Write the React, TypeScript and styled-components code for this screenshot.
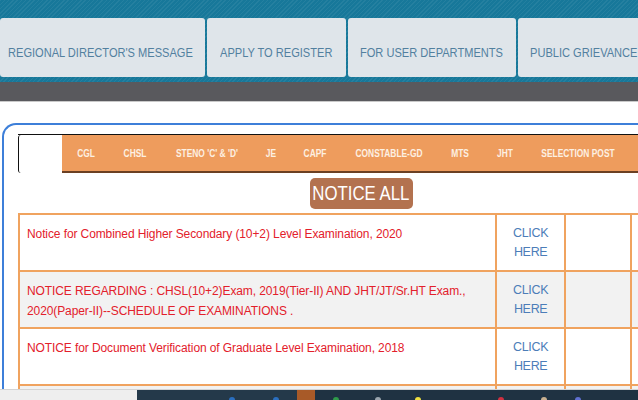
import React from 'react';
import styled, {createGlobalStyle} from 'styled-components';

const GlobalStyle = createGlobalStyle`
  html, body {
    margin: 0;
    padding: 0;
    background: #ffffff;
    overflow: hidden;
  }
  body {
    font-family: "Liberation Sans", Arial, sans-serif;
  }
`

const Page = styled.div`
  width: 638px;
  height: 400px;
  display: flex;
  flex-direction: column;
  overflow: hidden;
`
const TopNav = styled.nav`
  height: 82px;
  box-sizing: border-box;
  padding-top: 18px;
  padding-bottom: 5px;
  display: flex;
  gap: 2px;
  background-color: #17789a;
  background-image: repeating-linear-gradient(
    135deg,
    rgba(255, 255, 255, 0.06) 0px,
    rgba(255, 255, 255, 0.06) 1px,
    rgba(0, 0, 0, 0) 1px,
    rgba(0, 0, 0, 0) 3px
  );
`
const NavTab = styled.a<{ $w: number; $pad: number }>`
  width: ${p => p.$w}px;
  flex-shrink: 0;
  box-sizing: border-box;
  padding-left: ${p => p.$pad}px;
  padding-top: 9px;
  background: #dfe5ea;
  border-radius: 3px;
  display: flex;
  align-items: center;
  color: #52809f;
  white-space: nowrap;
  overflow: hidden;
`
const NavLabel = styled.span`
  display: inline-block;
  font-size: 13.5px;
  transform: scaleX(0.82);
  transform-origin: left center;
`
const GreyBand = styled.div`
  height: 19px;
  background: #59595d;
  border-bottom: 1px solid #c9c9c9;
`
const Content = styled.main`
  flex: 1;
  padding: 21px 0 0 2px;
  display: flex;
  flex-direction: column;
  min-height: 0;
`
const Panel = styled.section`
  flex: 1;
  border: 2px solid #3d7fd9;
  border-right: none;
  border-bottom: none;
  border-top-left-radius: 14px;
  padding: 9px 0 0 14px;
  min-height: 0;
  overflow: hidden;
`
const ExamBar = styled.div`
  display: flex;
  height: 38px;
  width: 700px;
  border-top: 1px solid #111;
`
const BlankTab = styled.div`
  width: 43px;
  border-left: 1px solid #111;
  border-top-left-radius: 3px;
  border-bottom-left-radius: 3px;
  background: #fff;
`
const ExamList = styled.ul`
  flex: 1;
  margin: 0;
  padding: 0;
  list-style: none;
  display: flex;
  align-items: center;
  background: #ee9c5d;
  border-bottom: 2px solid #6b4023;
  white-space: nowrap;
`
const ExamItem = styled.li<{ $w: number }>`
  width: ${p => p.$w}px;
  flex-shrink: 0;
  text-align: center;
  color: #fdf0e2;
  font-weight: bold;
  font-size: 11.5px;
  transform: scaleX(0.73);
`
const NoticeRow = styled.div`
  width: 686px;
  display: flex;
  justify-content: center;
  padding: 5px 0 4px 0;
`
const NoticeButton = styled.button`
  width: 103px;
  height: 31px;
  padding: 0;
  background: #b3724f;
  color: #ffffff;
  border: none;
  border-radius: 5px;
  display: flex;
  align-items: center;
  justify-content: center;
  overflow: visible;
  white-space: nowrap;
  font-family: "Liberation Sans", Arial, sans-serif;
`
const NoticeLabel = styled.span`
  display: inline-block;
  font-size: 20px;
  transform: scaleX(0.84);
`
const Table = styled.table`
  border-collapse: collapse;
  width: 680px;
`
const Tr = styled.tr<{ $alt?: boolean }>`
  background: ${p => (p.$alt ? '#f2f2f2' : '#ffffff')};
  height: 57px;
`
const TitleCell = styled.td`
  width: 466px;
  border: 2px solid #f0a35f;
  vertical-align: top;
  padding: 9px 8px 0 7px;
  color: #e3202b;
  font-size: 12px;
  line-height: 20px;
  letter-spacing: -0.1px;
`
const LinkCell = styled.td`
  width: 65px;
  border: 2px solid #f0a35f;
  vertical-align: top;
  padding-top: 9px;
  text-align: center;
  color: #4c7db8;
  font-size: 12.5px;
  letter-spacing: -0.3px;
  line-height: 19px;
`
const EmptyCell = styled.td`
  width: 63px;
  border: 2px solid #f0a35f;
`
const Taskbar = styled.footer`
  height: 11px;
  display: flex;
  flex-shrink: 0;
`
const TaskSegment = styled.div<{ $w?: number; $bg: string }>`
  width: ${p => (p.$w ? `${p.$w}px` : 'auto')};
  flex: ${p => (p.$w ? '0 0 auto' : '1')};
  background: ${p => p.$bg};
  border-top: 1px solid #d4d4d4;
  position: relative;
`
const Pip = styled.span<{ $x: number; $c: string }>`
  position: absolute;
  left: ${p => p.$x}px;
  bottom: 0;
  width: 6px;
  height: 3px;
  border-radius: 3px 3px 0 0;
  background: ${p => p.$c};
`

const navTabs = [
    {label: "REGIONAL DIRECTOR'S MESSAGE", w: 205, pad: 8},
    {label: 'APPLY TO REGISTER', w: 139, pad: 13},
    {label: 'FOR USER DEPARTMENTS', w: 168, pad: 12},
    {label: 'PUBLIC GRIEVANCE', w: 130, pad: 12},
];

const exams = [
    {label: 'CGL', w: 48},
    {label: 'CHSL', w: 50},
    {label: "STENO 'C' & 'D'", w: 94},
    {label: 'JE', w: 34},
    {label: 'CAPF', w: 54},
    {label: 'CONSTABLE-GD', w: 94},
    {label: 'MTS', w: 48},
    {label: 'JHT', w: 42},
    {label: 'SELECTION POST', w: 104},
];

const notices = [
    'Notice for Combined Higher Secondary (10+2) Level Examination, 2020',
    'NOTICE REGARDING : CHSL(10+2)Exam, 2019(Tier-II) AND JHT/JT/Sr.HT Exam., 2020(Paper-II)--SCHEDULE OF EXAMINATIONS .',
    'NOTICE for Document Verification of Graduate Level Examination, 2018',
    '',
];

const App = () => {
    return (
        <Page>
            <GlobalStyle/>
            <TopNav>
                {navTabs.map(t => (
                    <NavTab key={t.label} $w={t.w} $pad={t.pad}>
                        <NavLabel>{t.label}</NavLabel>
                    </NavTab>
                ))}
            </TopNav>
            <GreyBand/>
            <Content>
                <Panel>
                    <ExamBar>
                        <BlankTab/>
                        <ExamList>
                            {exams.map(e => (
                                <ExamItem key={e.label} $w={e.w}>{e.label}</ExamItem>
                            ))}
                        </ExamList>
                    </ExamBar>
                    <NoticeRow>
                        <NoticeButton><NoticeLabel>NOTICE ALL</NoticeLabel></NoticeButton>
                    </NoticeRow>
                    <Table>
                        <tbody>
                        {notices.map((n, i) => (
                            <Tr key={i} $alt={i % 2 === 1}>
                                <TitleCell>{n}</TitleCell>
                                <LinkCell>{n && <>CLICK<br/>HERE</>}</LinkCell>
                                <EmptyCell/>
                                <EmptyCell/>
                            </Tr>
                        ))}
                        </tbody>
                    </Table>
                </Panel>
            </Content>
            <Taskbar>
                <TaskSegment $w={137} $bg="#eeeeee"/>
                <TaskSegment $w={160} $bg="#24394a">
                    <Pip $x={92} $c="#2a6fc0"/>
                    <Pip $x={136} $c="#2a6fc0"/>
                </TaskSegment>
                <TaskSegment $w={18} $bg="#a85a28"/>
                <TaskSegment $bg="#1f3242">
                    <Pip $x={18} $c="#2f9a4a"/>
                    <Pip $x={60} $c="#9aa4ad"/>
                    <Pip $x={100} $c="#f0e040"/>
                    <Pip $x={183} $c="#d03040"/>
                    <Pip $x={226} $c="#c8b090"/>
                    <Pip $x={260} $c="#6070d0"/>
                </TaskSegment>
            </Taskbar>
        </Page>
    );
};

export default App;
